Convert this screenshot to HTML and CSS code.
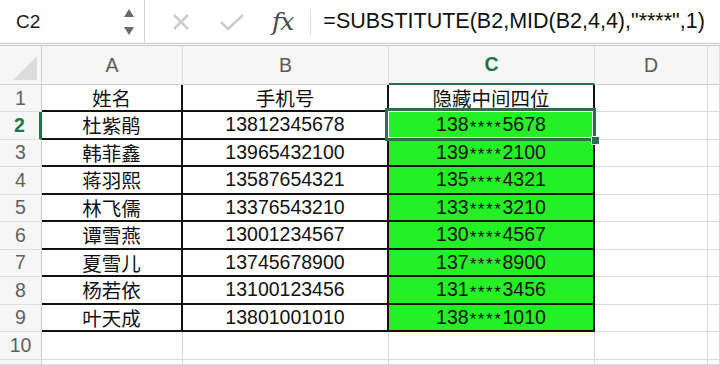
FILE: index.html
```html
<!DOCTYPE html>
<html lang="zh-CN">
<head>
  <meta charset="UTF-8" />
  <title>SUBSTITUTE</title>
  <link rel="stylesheet" href="styles.css">
</head>
<body>
  <div class="formula-bar">
    <div class="name-box">
      <span class="cell-ref">C2</span>
      <div class="spinner">
        <svg width="12" height="28" viewBox="0 0 12 28">
          <polygon points="6,1 11,9 1,9" fill="#6b6b6b" />
          <polygon points="1,19 11,19 6,27" fill="#6b6b6b" />
        </svg>
      </div>
    </div>
    <div class="actions">
      <svg class="icon-x" width="20" height="20" viewBox="0 0 20 20">
        <path d="M3 3 L17 17 M17 3 L3 17" stroke="#cdcdcd" stroke-width="2.6" fill="none" />
      </svg>
      <svg class="icon-check" width="26" height="20" viewBox="0 0 26 20">
        <path d="M2 10 L9 17 L24 3" stroke="#cdcdcd" stroke-width="2.6" fill="none" />
      </svg>
      <span class="fx">fx</span>
    </div>
    <div class="formula">=SUBSTITUTE(B2,MID(B2,4,4),"****",1)</div>
  </div>

  <div class="sheet">
    <!-- column headers -->
    <div class="hd corner"></div>
    <div class="hd col">A</div>
    <div class="hd col">B</div>
    <div class="hd col active-col">C</div>
    <div class="hd col">D</div>
    <div class="hd col"></div>

    <div class="rh">1</div>
    <div class="c d">姓名</div>
    <div class="c d">手机号</div>
    <div class="c d">隐藏中间四位</div>
    <div class="c"></div>
    <div class="c"></div>

    <div class="rh active-row">2</div>
    <div class="c d">杜紫鹃</div>
    <div class="c d">13812345678</div>
    <div class="c d g selected">138<span class="mask">****</span>5678<span class="sel"><span class="handle"></span></span></div>
    <div class="c"></div>
    <div class="c"></div>

    <div class="rh">3</div>
    <div class="c d">韩菲鑫</div>
    <div class="c d">13965432100</div>
    <div class="c d g">139<span class="mask">****</span>2100</div>
    <div class="c"></div>
    <div class="c"></div>

    <div class="rh">4</div>
    <div class="c d">蒋羽熙</div>
    <div class="c d">13587654321</div>
    <div class="c d g">135<span class="mask">****</span>4321</div>
    <div class="c"></div>
    <div class="c"></div>

    <div class="rh">5</div>
    <div class="c d">林飞儒</div>
    <div class="c d">13376543210</div>
    <div class="c d g">133<span class="mask">****</span>3210</div>
    <div class="c"></div>
    <div class="c"></div>

    <div class="rh">6</div>
    <div class="c d">谭雪燕</div>
    <div class="c d">13001234567</div>
    <div class="c d g">130<span class="mask">****</span>4567</div>
    <div class="c"></div>
    <div class="c"></div>

    <div class="rh">7</div>
    <div class="c d">夏雪儿</div>
    <div class="c d">13745678900</div>
    <div class="c d g">137<span class="mask">****</span>8900</div>
    <div class="c"></div>
    <div class="c"></div>

    <div class="rh">8</div>
    <div class="c d">杨若依</div>
    <div class="c d">13100123456</div>
    <div class="c d g">131<span class="mask">****</span>3456</div>
    <div class="c"></div>
    <div class="c"></div>

    <div class="rh">9</div>
    <div class="c d">叶天成</div>
    <div class="c d">13801001010</div>
    <div class="c d g">138<span class="mask">****</span>1010</div>
    <div class="c"></div>
    <div class="c"></div>

    <div class="rh">10</div>
    <div class="c"></div>
    <div class="c"></div>
    <div class="c"></div>
    <div class="c"></div>
    <div class="c"></div>

    <div class="rh"></div>
    <div class="c"></div>
    <div class="c"></div>
    <div class="c"></div>
    <div class="c"></div>
    <div class="c"></div>
  </div>
</body>
</html>
```

FILE: styles.css
```css
body {
  margin: 0;
  width: 720px;
  height: 365px;
  overflow: hidden;
  background: #fff;
  font-family: "Liberation Sans", "Noto Sans CJK SC", Arial, sans-serif;
  color: #111;
}

/* formula bar */
.formula-bar {
  display: flex;
  align-items: center;
  height: 43px;
  border-bottom: 3px double #c4c4c4;
}

.name-box {
  display: flex;
  align-items: center;
  justify-content: space-between;
  width: 145px;
  height: 43px;
  padding: 0 9px 0 16px;
  box-sizing: border-box;
  border-right: 1px solid #d6d6d6;
}

.cell-ref {
  font-size: 19px;
  color: #1a1a1a;
}

.spinner svg {
  display: block;
}

.actions {
  display: flex;
  align-items: center;
  height: 26px;
  padding: 0 0 0 26px;
  border-right: 1px solid #dcdcdc;
}

.icon-x {
  margin-right: 28px;
}

.icon-check {
  margin-right: 27px;
}

.fx {
  font-family: "DejaVu Serif", "Liberation Serif", serif;
  font-style: italic;
  font-size: 25px;
  color: #4a4a4a;
  margin-right: 17px;
  letter-spacing: -1px;
  line-height: 26px;
}

.formula {
  padding-left: 12px;
  font-size: 21.5px;
  color: #111;
  white-space: nowrap;
}

/* sheet grid */
.sheet {
  display: grid;
  height: 319px;
  overflow: hidden;
  grid-template-columns: 42px 141px 206px 206px 113px 1fr;
  grid-template-rows: 39px 27px repeat(9, 27.5px) 1fr;
}

.sheet > div {
  box-sizing: border-box;
  display: flex;
  align-items: center;
  justify-content: center;
  font-size: 19.5px;
  white-space: nowrap;
}

.hd {
  background: #f6f6f6;
  color: #5a5a5a;
  border-right: 1px solid #dedede;
  border-bottom: 1px solid #cfcfcf;
}

.corner {
  position: relative;
  border-right: 1px solid #cfcfcf;
}

.corner::after {
  content: "";
  position: absolute;
  right: 4px;
  bottom: 4px;
  border-style: solid;
  border-width: 0 0 24px 24px;
  border-color: transparent transparent #dcdcdc transparent;
}

.active-col {
  color: #217346;
  font-weight: bold;
  border-bottom: 2px solid #2b6f4b;
}

.rh {
  background: #f6f6f6;
  color: #5f5f5f;
  border-right: 1px solid #cfcfcf;
  border-bottom: 1px solid #dedede;
  font-size: 19px;
}

.active-row {
  color: #217346;
  font-weight: bold;
  border-right: 3px solid #217346 !important;
}

.c {
  border-right: 1px solid #dadada;
  border-bottom: 1px solid #dadada;
}

.c.d {
  border-right: 2px solid #111;
  border-bottom: 2px solid #111;
}

.g {
  background: #25ef25;
}

.mask {
  font-size: 17px;
  position: relative;
  top: 3px;
  letter-spacing: 1.6px;
  padding-left: 1px;
}

.selected {
  position: relative;
}

.sel {
  position: absolute;
  top: -4px;
  left: -4px;
  right: -3px;
  bottom: -3px;
  border: 3px solid #2b6f4b;
  box-shadow: inset 0 0 0 1px #fff;
}

.handle {
  position: absolute;
  right: -7px;
  bottom: -7px;
  width: 7px;
  height: 7px;
  background: #2b6f4b;
  border: 1px solid #fff;
}
```
